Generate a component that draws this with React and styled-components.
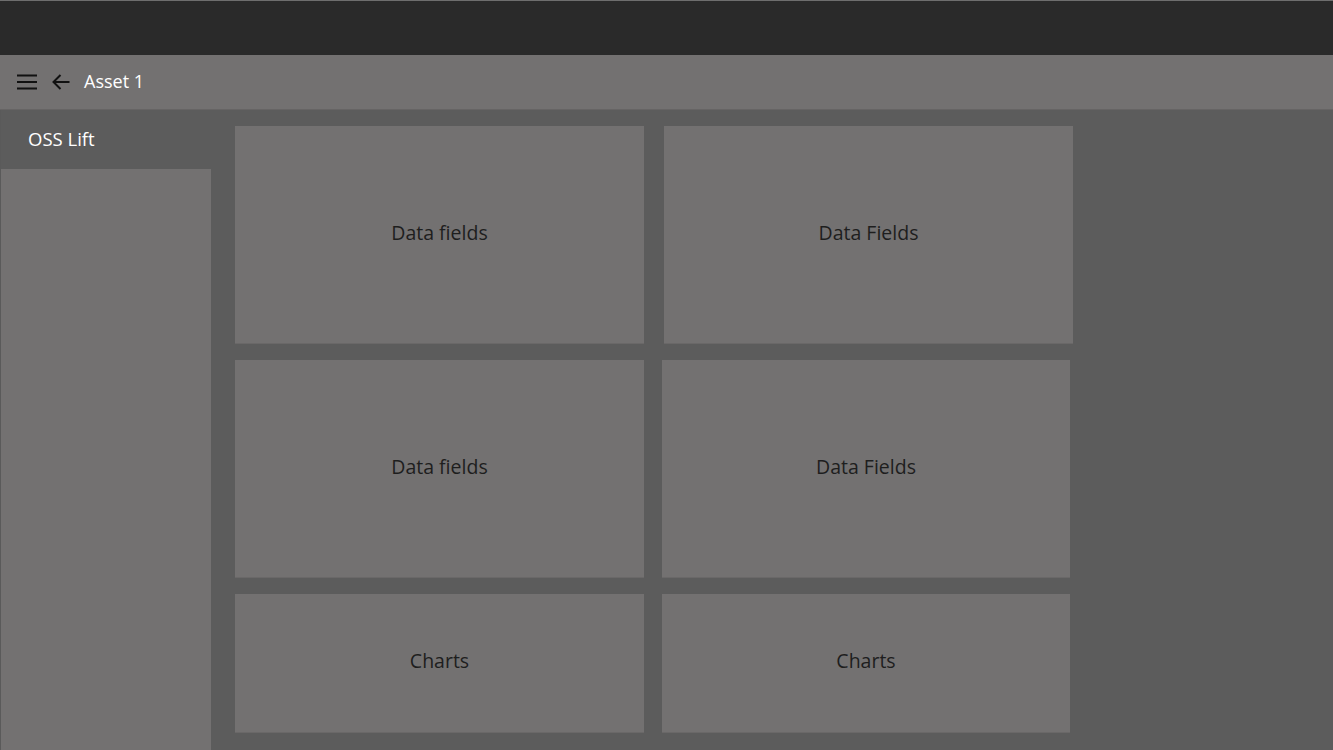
import React from 'react'
import styled, { createGlobalStyle } from 'styled-components'

const GlobalStyle = createGlobalStyle`
    html, body {
        margin: 0;
        padding: 0;
        background: #5c5c5c;
        font-family: "Open Sans", "Noto Sans", sans-serif;
    }
`

const Page = styled.div`
    display: flex;
    flex-direction: column;
    width: 1333px;
    height: 750px;
    overflow: hidden;
    background: #5c5c5c;
`

const TopBar = styled.div`
    height: 55px;
    flex-shrink: 0;
    background: #2a2a2a;
    border-top: 1px solid #6e6e6e;
    box-sizing: border-box;
`

const Toolbar = styled.div`
    display: flex;
    align-items: center;
    height: 54px;
    flex-shrink: 0;
    padding-left: 16px;
    background: #737171;
    border-bottom: 1px solid #666464;
`

const IconButton = styled.span`
    display: flex;
    align-items: center;
    margin-right: ${p => p.gap || 14}px;
    color: #111;
`

const Title = styled.span`
    font-size: 18px;
    color: #fff;
    margin-top: -2px;
`

const Body = styled.div`
    display: flex;
    flex: 1;
    min-height: 0;
`

const Sidebar = styled.div`
    display: flex;
    flex-direction: column;
    width: 211px;
    flex-shrink: 0;
    border-left: 1px solid #5a5a5a;
    box-sizing: border-box;
    background: #737171;
`

const NavItem = styled.div`
    height: 59px;
    display: flex;
    align-items: center;
    padding: 0 0 2px 27px;
    box-sizing: border-box;
    font-size: 18.5px;
    color: #fff;
    background: ${p => (p.active ? '#5c5c5c' : 'transparent')};
`

const Content = styled.div`
    display: flex;
    flex-direction: column;
    gap: 17px;
    padding: 16px 0 0 24px;
`

const Row = styled.div`
    display: flex;
    gap: ${p => p.gap}px;
`

const Card = styled.div`
    display: flex;
    align-items: center;
    justify-content: center;
    box-sizing: border-box;
    padding-bottom: 5px;
    width: ${p => p.w || 409}px;
    height: ${p => p.h}px;
    background: #737171;
    box-shadow: 0 1px 0 #6a6868;
    font-size: 19.5px;
    color: #1e1e1e;
`

const MenuIcon = () => (
    <svg width="22" height="18" viewBox="0 0 22 18">
        <path d="M1 2.5h20M1 9h20M1 15.5h20" stroke="currentColor" strokeWidth="2" />
    </svg>
)

const BackIcon = () => (
    <svg width="20" height="18" viewBox="0 0 20 18">
        <path d="M18.5 9H2.5M9.5 2L2.5 9l7 7" stroke="currentColor" strokeWidth="2" fill="none" />
    </svg>
)

const App = () => (
    <>
        <GlobalStyle />
        <Page>
            <TopBar />
            <Toolbar>
                <IconButton gap={13}><MenuIcon /></IconButton>
                <IconButton gap={13}><BackIcon /></IconButton>
                <Title>Asset 1</Title>
            </Toolbar>
            <Body>
                <Sidebar>
                    <NavItem active>OSS Lift</NavItem>
                </Sidebar>
                <Content>
                    <Row gap={20}>
                        <Card h={217}>Data fields</Card>
                        <Card h={217}>Data Fields</Card>
                    </Row>
                    <Row gap={18}>
                        <Card h={217}>Data fields</Card>
                        <Card h={217} w={408}>Data Fields</Card>
                    </Row>
                    <Row gap={18}>
                        <Card h={138}>Charts</Card>
                        <Card h={138} w={408}>Charts</Card>
                    </Row>
                </Content>
            </Body>
        </Page>
    </>
)

export default App
